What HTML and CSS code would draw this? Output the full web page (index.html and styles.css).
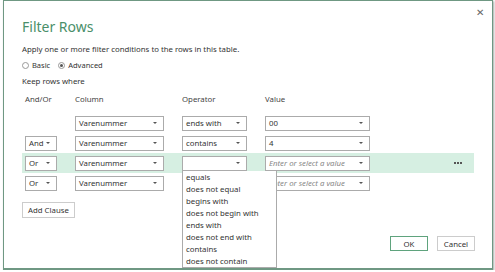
FILE: index.html
```html
<!DOCTYPE html>
<html lang="en">

<head>
  <meta charset="UTF-8">
  <title>Filter Rows</title>
  <link rel="stylesheet" href="styles.css">
</head>

<body>
  <div class="dialog">
    <button class="close">&#x2715;</button>
    <h1>Filter Rows</h1>
    <p class="intro">Apply one or more filter conditions to the rows in this table.</p>
    <div class="modes">
      <label><span class="radio"></span>Basic</label>
      <label><span class="radio on"></span>Advanced</label>
    </div>
    <p class="keep">Keep rows where</p>

    <div class="grid head">
      <span>And/Or</span>
      <span>Column</span>
      <span>Operator</span>
      <span>Value</span>
    </div>

    <div class="grid row">
      <span></span>
      <div class="select">Varenummer</div>
      <div class="select">ends with</div>
      <div class="select">00</div>
    </div>
    <div class="grid row">
      <div class="select">And</div>
      <div class="select">Varenummer</div>
      <div class="select">contains</div>
      <div class="select">4</div>
    </div>
    <div class="grid row active">
      <div class="select">Or</div>
      <div class="select">Varenummer</div>
      <div class="select open">
        <ul class="options">
          <li>equals</li>
          <li>does not equal</li>
          <li>begins with</li>
          <li>does not begin with</li>
          <li>ends with</li>
          <li>does not end with</li>
          <li>contains</li>
          <li>does not contain</li>
        </ul>
      </div>
      <div class="select hint">Enter or select a value</div>
      <span class="more"><i></i><i></i><i></i></span>
    </div>
    <div class="grid row">
      <div class="select">Or</div>
      <div class="select">Varenummer</div>
      <div class="select"></div>
      <div class="select hint">Enter or select a value</div>
    </div>

    <button class="add">Add Clause</button>

    <footer>
      <button class="ok">OK</button>
      <button>Cancel</button>
    </footer>
  </div>
</body>

</html>
```

FILE: styles.css
```css
body {
  margin: 0;
  background: #fff;
  font-family: "Noto Sans", "Open Sans", sans-serif;
  font-size: 7.8px;
  color: #333;
}

.dialog {
  box-sizing: border-box;
  position: relative;
  overflow: hidden;
  width: 490px;
  height: 270px;
  margin-left: 3px;
  border: 1px solid #6f9883;
  border-bottom-width: 2px;
  box-shadow: 1px 1px 2px rgba(0, 0, 0, 0.35);
  padding: 17px 18px 0 18px;
}

.close {
  position: absolute;
  top: 4px;
  right: 8px;
  border: none;
  background: none;
  color: #666;
  font-size: 10px;
  padding: 0;
}

h1 {
  margin: 0;
  font-size: 14px;
  font-weight: normal;
  color: #4a8f6a;
  line-height: 18px;
}

.intro {
  margin: 7px 0 0;
  line-height: 12px;
}

.modes {
  display: flex;
  gap: 8px;
  margin-top: 4px;
  line-height: 12px;
  font-size: 7.5px;

  label {
    display: flex;
    align-items: center;
    gap: 3px;
  }
}

.radio {
  width: 5px;
  height: 5px;
  border: 1px solid #999;
  border-radius: 50%;
  position: relative;

  &.on::after {
    content: "";
    position: absolute;
    inset: 1px;
    border-radius: 50%;
    background: #555;
  }
}

.keep {
  margin: 4px 0 0;
  line-height: 12px;
}

.grid {
  display: grid;
  grid-template-columns: 32px 89px 65px 105px 1fr;
  column-gap: 18px;
  align-items: center;
  padding-left: 3px;
}

.head {
  margin-top: 6px;
  line-height: 12px;
  margin-bottom: 8px;
  color: #444;
}

.row {
  height: 20px;
}

.row.active {
  background: #d6efe2;
}

.select {
  box-sizing: border-box;
  position: relative;
  height: 15px;
  line-height: 13px;
  border: 1px solid #ababab;
  background: #fff;
  padding: 0 10px 0 3px;
  white-space: nowrap;

  &::after {
    content: "";
    position: absolute;
    right: 6px;
    top: 5px;
    border: 2px solid transparent;
    border-top: 2px solid #555;
    border-bottom: none;
  }

  &.hint {
    color: #888;
    font-style: italic;
  }
}

.options {
  position: absolute;
  z-index: 2;
  top: 14px;
  left: -1px;
  width: 90px;
  margin: 0;
  padding: 0 0 0 3px;
  list-style: none;
  background: #fff;
  border: 1px solid #ababab;
  border-top: none;
  line-height: 12px;
}

.more {
  justify-self: end;
  margin-right: 12px;
  display: flex;
  gap: 1px;

  i {
    width: 2px;
    height: 2px;
    background: #555;
  }
}

button {
  font-family: inherit;
  font-size: 7.8px;
  color: #333;
}

.add {
  margin-top: 9px;
  height: 16px;
  padding: 0 5px;
  background: #fff;
  border: 1px solid #ccc;
}

footer {
  position: absolute;
  right: 17px;
  bottom: 17px;
  display: flex;
  gap: 9px;

  button {
    width: 38px;
    height: 15px;
    padding: 0;
    background: #fff;
    border: 1px solid #ccc;
  }

  .ok {
    border-color: #5fa37d;
  }
}
```
